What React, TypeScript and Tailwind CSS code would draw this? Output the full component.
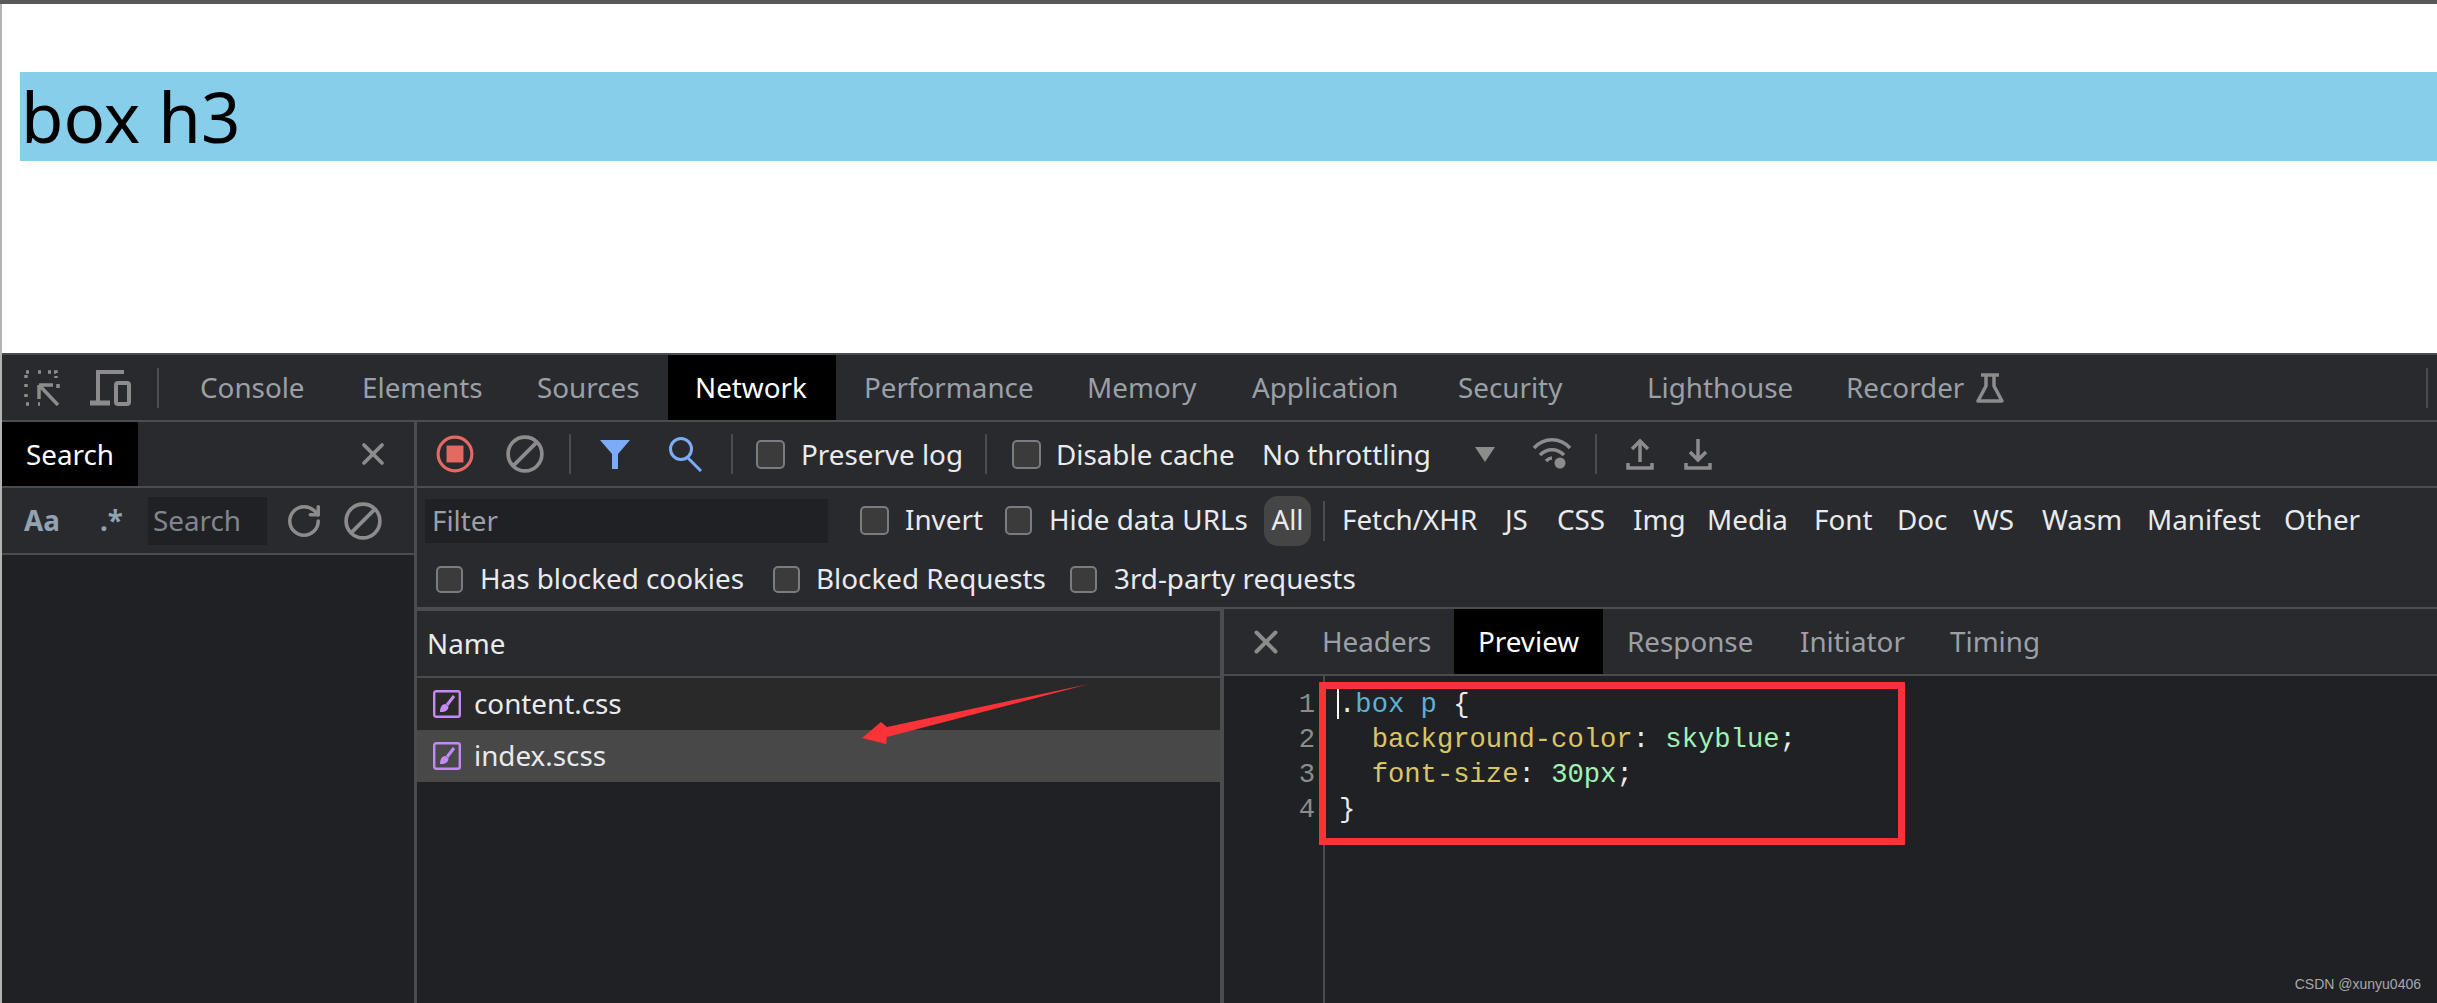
import { X, RotateCw } from 'lucide-react'

const TOP_TABS = [
  { label: 'Console', box: 'w-[162px]' },
  { label: 'Elements', box: 'w-[175px]' },
  { label: 'Sources', box: 'w-[131px]' },
  { label: 'Network', box: 'w-[168px] pl-[27px] bg-black text-white self-stretch flex items-center' },
  { label: 'Performance', box: 'w-[223px] ml-[28px]' },
  { label: 'Memory', box: 'w-[165px]' },
  { label: 'Application', box: 'w-[206px]' },
  { label: 'Security', box: 'w-[189px]' },
  { label: 'Lighthouse', box: 'w-[199px]' },
  { label: 'Recorder', box: 'w-[130px]' },
]

const TYPES = [
  { label: 'Fetch/XHR', box: 'w-[163px]' },
  { label: 'JS', box: 'w-[52px]' },
  { label: 'CSS', box: 'w-[76px]' },
  { label: 'Img', box: 'w-[74px]' },
  { label: 'Media', box: 'w-[107px]' },
  { label: 'Font', box: 'w-[83px]' },
  { label: 'Doc', box: 'w-[76px]' },
  { label: 'WS', box: 'w-[69px]' },
  { label: 'Wasm', box: 'w-[105px]' },
  { label: 'Manifest', box: 'w-[137px]' },
  { label: 'Other', box: 'w-[71px]' },
]

const DETAIL_TABS = [
  { label: 'Headers', box: 'w-[132px] ml-[98px]' },
  { label: 'Preview', box: 'w-[149px] pl-[24px] bg-black text-white self-stretch flex items-center' },
  { label: 'Response', box: 'w-[173px] ml-[24px]' },
  { label: 'Initiator', box: 'w-[150px]' },
  { label: 'Timing', box: 'w-[100px]' },
]

function Box({ className }: { className: string }) {
  return <span className={`block shrink-0 rounded-[5px] border-2 border-[#7a7c7f] bg-[#3b3b3b] ${className}`} />
}

function Sep({ className }: { className: string }) {
  return <span className={`block w-[2px] shrink-0 bg-[#494c50] ${className}`} />
}

function Ban({ className }: { className: string }) {
  return (
    <svg viewBox="0 0 36 36" className={`shrink-0 ${className}`} fill="none" stroke="#8c8c8c" strokeWidth="3.500">
      <circle cx="18" cy="18" r="16" />
      <path d="M7 29 29 7" />
    </svg>
  )
}

function FileIcon() {
  return (
    <svg viewBox="0 0 28 28" className="ml-[16px] h-[28px] w-[28px] shrink-0" fill="none">
      <rect x="1.200" y="1.200" width="25.600" height="25.600" rx="2" stroke="#c58af9" strokeWidth="2.400" />
      <path d="M21 6 14 15" stroke="#c58af9" strokeWidth="3" />
      <path d="M7 22c0-5 2-8 5.500-8l3 2.500c0 4-4 6-8.500 5.500z" fill="#c58af9" />
    </svg>
  )
}

export default function App() {
  return (
    <div className="relative h-[1003px] w-full overflow-hidden bg-[#b3b3b3] pl-[2px] font-['Noto_Sans',sans-serif] text-[27.8px] leading-none text-[#e8eaed]">
      <div className="-ml-[2px] h-[4px] bg-[#59595b]" />
      <div className="h-[349px] bg-white pl-[18px] pt-[68px]">
        <div className="flex h-[89px] items-center bg-[#87ceeb] pl-[1px] text-[69px] text-black">box h3</div>
      </div>

      <div className="flex h-[650px] flex-col border-t-2 border-[#494c50] bg-[#292a2d]">
        {/* main tab strip */}
        <div className="flex h-[65px] items-center text-[#9aa0a6]">
          <svg viewBox="0 0 36 36" className="ml-[22px] h-[36px] w-[36px] shrink-0" fill="none" stroke="#8c8c8c" strokeWidth="3.500">
            <path d="M2 8V2h6M14 2h4M24 2h8v6M2 14v4M2 24v4M2 34h6M14 34h2" strokeDasharray="3 3" />
            <path d="M34 14v4" />
            <path d="M15 15h14M15 15v14M15 15l19 20" />
          </svg>
          <svg viewBox="0 0 42 38" className="ml-[30px] h-[38px] w-[42px] shrink-0" fill="none" stroke="#8c8c8c" strokeWidth="4">
            <path d="M8 32V3h26" />
            <path d="M0 34h20" strokeWidth="5" />
            <rect x="26" y="14" width="13" height="21" rx="2" />
          </svg>
          <Sep className="ml-[25px] h-[40px]" />
          <div className="ml-[41px] flex h-full items-center">
            {TOP_TABS.map((tab) => (
              <span key={tab.label} className={`shrink-0 whitespace-nowrap ${tab.box}`}>
                {tab.label}
              </span>
            ))}
            <svg viewBox="0 0 28 30" className="h-[30px] w-[28px] shrink-0" fill="none" stroke="#8c8c8c" strokeWidth="3.500">
              <path d="M5 2h18M10 2v11L2 28h24l-8-15V2" strokeLinejoin="round" />
            </svg>
            <Sep className="ml-[422px] h-[40px]" />
          </div>
        </div>
        <div className="h-[2px] bg-[#494c50]" />

        <div className="flex min-h-0 flex-1">
          {/* search drawer */}
          <div className="flex w-[415px] shrink-0 flex-col border-r-[3px] border-[#494c50] bg-[#202124]">
            <div className="flex h-[64px] items-center bg-[#292a2d]">
              <span className="flex h-full w-[136px] items-center bg-black pl-[24px] pt-[2px] text-white">Search</span>
              <X className="ml-[217px] h-[36px] w-[36px] text-[#8c8c8c]" strokeWidth={2.500} />
            </div>
            <div className="h-[2px] bg-[#494c50]" />
            <div className="flex h-[65px] items-center bg-[#292a2d]">
              <span className="ml-[22px] w-[54px] font-bold text-[#91a2b3]">Aa</span>
              <span className="ml-[22px] w-[48px] font-bold text-[#91a2b3]">.*</span>
              <span className="flex h-[48px] w-[119px] items-center bg-[#202124] pl-[5px] text-[#80868b]">Search</span>
              <RotateCw className="ml-[18px] h-[38px] w-[38px] text-[#8c8c8c]" strokeWidth={2.200} />
              <Ban className="ml-[21px] h-[38px] w-[38px]" />
            </div>
            <div className="h-[2px] bg-[#494c50]" />
          </div>

          <div className="flex min-w-0 flex-1 flex-col">
            {/* network toolbar */}
            <div className="flex h-[64px] items-center">
              <svg viewBox="0 0 36 36" className="ml-[19px] h-[38px] w-[38px] shrink-0">
                <circle cx="18" cy="18" r="16" fill="none" stroke="#e46962" strokeWidth="3" />
                <rect x="10" y="10" width="16" height="16" fill="#e46962" />
              </svg>
              <Ban className="ml-[32px] h-[38px] w-[38px]" />
              <Sep className="ml-[25px] h-[40px]" />
              <svg viewBox="0 0 30 30" className="ml-[29px] h-[32px] w-[30px] shrink-0" fill="#7cacf8">
                <path d="M0 1h30L18 15v15h-6V15z" />
              </svg>
              <svg viewBox="0 0 34 36" className="ml-[38px] h-[36px] w-[34px] shrink-0" fill="none" stroke="#7cacf8" strokeWidth="3">
                <circle cx="13" cy="13" r="10.500" />
                <path d="M20 22 33 35" />
              </svg>
              <Sep className="ml-[29px] h-[40px]" />
              <Box className="ml-[23px] h-[29px] w-[29px]" />
              <span className="ml-[16px] w-[184px] shrink-0 whitespace-nowrap pt-[2px]">Preserve log</span>
              <Sep className="h-[40px]" />
              <Box className="ml-[25px] h-[29px] w-[29px]" />
              <span className="ml-[15px] w-[206px] shrink-0 whitespace-nowrap pt-[2px]">Disable cache</span>
              <span className="w-[213px] shrink-0 whitespace-nowrap pt-[2px]">No throttling</span>
              <span className="h-0 w-0 shrink-0 border-x-[10px] border-t-[15px] border-x-transparent border-t-[#8c8c8c]" />
              <svg viewBox="0 0 40 34" className="ml-[37px] h-[34px] w-[40px] shrink-0" fill="none" stroke="#8c8c8c" strokeWidth="3.500">
                <path d="M2 11c10-11 26-11 36 0M8 18c7-7 17-7 24 0M14 24c2-2 4-3 6-3" />
                <circle cx="28" cy="26" r="4" fill="#8c8c8c" strokeWidth="3" />
              </svg>
              <Sep className="ml-[23px] h-[40px]" />
              <svg viewBox="0 0 28 32" className="ml-[29px] h-[32px] w-[28px] shrink-0" fill="none" stroke="#8c8c8c" strokeWidth="3.500">
                <path d="M14 24V3M6 11l8-8 8 8M2 25v5h24v-5" />
              </svg>
              <svg viewBox="0 0 28 32" className="ml-[30px] h-[32px] w-[28px] shrink-0" fill="none" stroke="#8c8c8c" strokeWidth="3.500">
                <path d="M14 1v21M6 14l8 8 8-8M2 25v5h24v-5" />
              </svg>
            </div>
            <div className="h-[2px] bg-[#494c50]" />

            {/* filter bar */}
            <div className="flex h-[65px] items-center">
              <span className="ml-[8px] flex h-[44px] w-[403px] shrink-0 items-center bg-[#202124] pl-[7px] text-[#9aa0a6]">Filter</span>
              <Box className="ml-[32px] h-[29px] w-[29px]" />
              <span className="ml-[16px] w-[100px] shrink-0 pb-[2px]">Invert</span>
              <Box className="h-[29px] w-[27px]" />
              <span className="ml-[17px] w-[215px] shrink-0 whitespace-nowrap pb-[2px]">Hide data URLs</span>
              <span className="flex h-[50px] w-[47px] shrink-0 items-center justify-center rounded-[14px] bg-[#454545] pb-[2px]">All</span>
              <Sep className="ml-[12px] h-[40px]" />
              <div className="ml-[17px] flex items-center pb-[2px]">
                {TYPES.map((type) => (
                  <span key={type.label} className={`shrink-0 whitespace-nowrap ${type.box}`}>
                    {type.label}
                  </span>
                ))}
              </div>
            </div>
            <div className="flex h-[54px] items-center pb-[2px]">
              <Box className="ml-[19px] h-[27px] w-[27px]" />
              <span className="ml-[17px] w-[293px] shrink-0 whitespace-nowrap">Has blocked cookies</span>
              <Box className="h-[27px] w-[27px]" />
              <span className="ml-[16px] w-[254px] shrink-0 whitespace-nowrap">Blocked Requests</span>
              <Box className="h-[27px] w-[27px]" />
              <span className="ml-[17px] shrink-0 whitespace-nowrap">3rd-party requests</span>
            </div>
            <div className="h-[2px] bg-[#494c50]" />

            <div className="flex min-h-0 flex-1">
              {/* request list */}
              <div className="flex w-[807px] shrink-0 flex-col border-r-4 border-[#494c50] bg-[#202124]">
                <div className="h-[2px] bg-[#494c50]" />
                <div className="flex h-[65px] items-center bg-[#292a2d] pl-[10px]">Name</div>
                <div className="h-[2px] bg-[#494c50]" />
                <div className="flex h-[52px] items-center bg-[#292929]">
                  <FileIcon />
                  <span className="ml-[13px]">content.css</span>
                </div>
                <div className="flex h-[52px] items-center bg-[#484848]">
                  <FileIcon />
                  <span className="ml-[13px]">index.scss</span>
                </div>
              </div>

              {/* details */}
              <div className="flex min-w-0 flex-1 flex-col bg-[#202124]">
                <div className="relative flex h-[65px] items-center bg-[#292a2d] text-[#9aa0a6]">
                  <X className="absolute left-[23px] top-[14px] h-[38px] w-[38px] text-[#8c8c8c]" strokeWidth={2.500} />
                  {DETAIL_TABS.map((tab) => (
                    <span key={tab.label} className={`shrink-0 whitespace-nowrap ${tab.box}`}>
                      {tab.label}
                    </span>
                  ))}
                </div>
                <div className="h-[2px] bg-[#494c50]" />
                <div className="flex min-h-0 flex-1 font-['Liberation_Mono',monospace] text-[27.200px] leading-[35px]">
                  <div className="w-[101px] shrink-0 border-r-2 border-[#494c50] pr-[8px] pt-[11px] text-right text-[#8c8c8c]">
                    <div>1</div>
                    <div>2</div>
                    <div>3</div>
                    <div>4</div>
                  </div>
                  <div className="pl-[14px] pt-[11px] whitespace-pre">
                    <div className="relative">
                      <span className="absolute -left-[2px] top-[2px] h-[30px] w-[2px] bg-white" />
                      <span>.</span>
                      <span className="text-[#5db0d7]">box p</span> {'{'}
                    </div>
                    <div>
                      {'  '}
                      <span className="text-[#d9c565]">background-color</span>: <span className="text-[#9ff2b4]">skyblue</span>;
                    </div>
                    <div>
                      {'  '}
                      <span className="text-[#d9c565]">font-size</span>: <span className="text-[#9ff2b4]">30px</span>;
                    </div>
                    <div>{'}'}</div>
                  </div>
                </div>
              </div>
            </div>
          </div>
        </div>
      </div>

      {/* annotations added on top of the screenshot */}
      <div className="absolute left-[1319px] top-[682px] h-[163px] w-[586px] border-[7px] border-[#fb3237]" />
      <svg viewBox="0 0 2437 1003" className="pointer-events-none absolute left-0 top-0 h-[1003px] w-[2437px]">
        <path d="M1089 684 887 727 881 722 862 738 886 744 887 737z" fill="#fb3237" />
      </svg>
      <span className="absolute right-[16px] top-[977px] font-['Liberation_Sans',sans-serif] text-[14px] text-[#a8a8a8]">CSDN @xunyu0406</span>
    </div>
  )
}
